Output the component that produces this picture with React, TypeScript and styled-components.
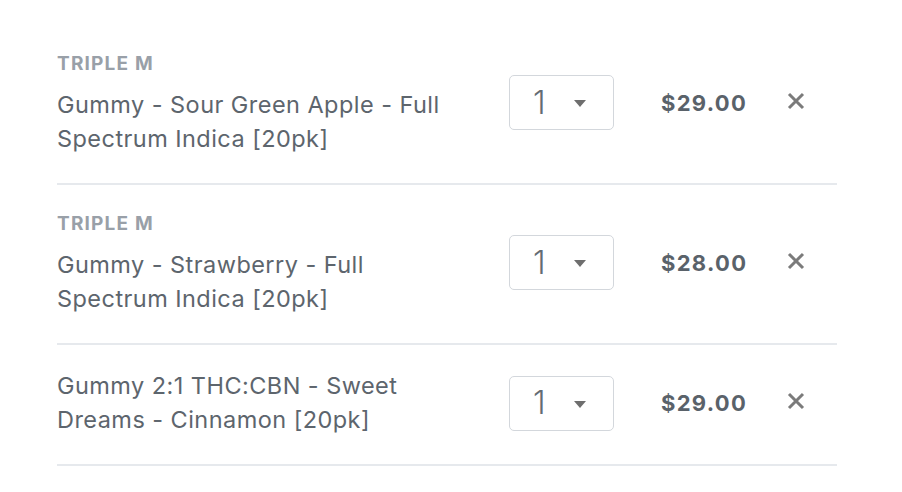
import styled, { createGlobalStyle } from "styled-components";

const GlobalStyle = createGlobalStyle`
  * {
    box-sizing: border-box;
  }
  body {
    margin: 0;
    background: #ffffff;
    font-family: Inter, "Noto Sans", Arial, sans-serif;
  }
`;

const Page = styled.div`
  padding: 25px 65px 0 57px;
  width: 902px;
`;

const List = styled.div`
  width: 780px;
  display: flex;
  flex-direction: column;
`;

const Row = styled.div`
  display: grid;
  grid-template-columns: 452px 105px 173px 1fr;
  align-items: center;
  padding: 24px 0 27px;
  border-bottom: 2px solid #e6e9ed;
`;

const Info = styled.div`
  display: flex;
  flex-direction: column;
  width: 398px;
`;

const Brand = styled.div`
  font-size: 19px;
  font-weight: 700;
  line-height: 30px;
  margin-bottom: 9px;
  color: #99a0a8;
  text-transform: uppercase;
  letter-spacing: 1.2px;
`;

const Name = styled.div`
  font-size: 23.5px;
  line-height: 34px;
  color: #5d656d;
  letter-spacing: 0.45px;
`;

const QtySelect = styled.div`
  width: 105px;
  height: 55px;
  border: 1.5px solid #d3d7dc;
  border-radius: 5px;
  display: flex;
  align-items: center;
  justify-content: space-between;
  padding: 0 27px 0 23px;
`;

const QtyValue = styled.span`
  font-size: 32px;
  font-weight: 300;
  color: #646b73;
  line-height: 1;
`;

const Caret = styled.span`
  width: 0;
  height: 0;
  border-left: 6.5px solid transparent;
  border-right: 6.5px solid transparent;
  border-top: 7px solid #6e6e6e;
  margin-top: 2px;
`;

const Price = styled.div`
  padding-left: 47px;
  font-size: 22px;
  font-weight: 700;
  color: #5a626a;
  letter-spacing: 1.3px;
`;

const RemoveButton = styled.button`
  border: none;
  background: none;
  padding: 0;
  width: 18px;
  height: 18px;
  display: flex;
  align-items: center;
  justify-content: center;
  cursor: pointer;
  align-self: center;
  margin-top: -4px;
`;

type CartItem = {
  id: number;
  brand?: string;
  name: string;
  qty: number;
  price: string;
};

const items: CartItem[] = [
  {
    id: 1,
    brand: "Triple M",
    name: "Gummy - Sour Green Apple - Full Spectrum Indica [20pk]",
    qty: 1,
    price: "$29.00",
  },
  {
    id: 2,
    brand: "Triple M",
    name: "Gummy - Strawberry - Full Spectrum Indica [20pk]",
    qty: 1,
    price: "$28.00",
  },
  {
    id: 3,
    name: "Gummy 2:1 THC:CBN - Sweet Dreams - Cinnamon [20pk]",
    qty: 1,
    price: "$29.00",
  },
];

const CloseIcon = () => (
  <svg width="18" height="18" viewBox="0 0 18 18">
    <path
      d="M2 2 L16 16 M16 2 L2 16"
      stroke="#7b7b7b"
      strokeWidth="3"
      strokeLinecap="butt"
    />
  </svg>
);

export default function App() {
  return (
    <>
      <GlobalStyle />
      <Page>
        <List>
          {items.map((item) => (
            <Row key={`cart-${item.id}`}>
              <Info>
                {item.brand && <Brand>{item.brand}</Brand>}
                <Name>{item.name}</Name>
              </Info>
              <QtySelect>
                <QtyValue>{item.qty}</QtyValue>
                <Caret />
              </QtySelect>
              <Price>{item.price}</Price>
              <RemoveButton aria-label="Remove">
                <CloseIcon />
              </RemoveButton>
            </Row>
          ))}
        </List>
      </Page>
    </>
  );
}
